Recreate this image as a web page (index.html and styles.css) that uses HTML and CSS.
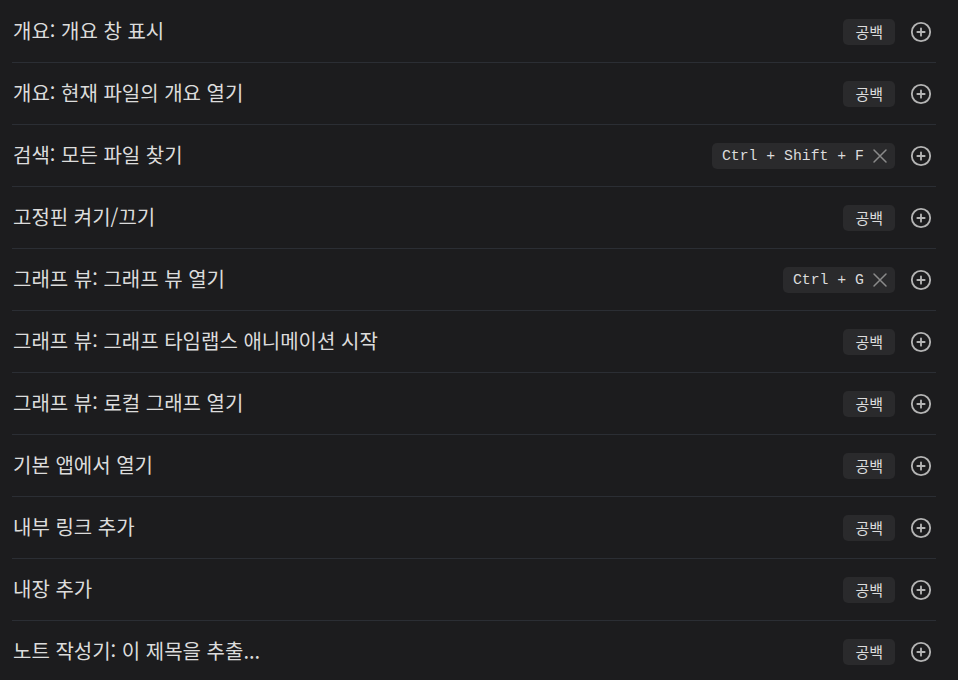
FILE: index.html
```html
<!DOCTYPE html>
<html lang="ko">
<head>
<meta charset="utf-8">
<title>Hotkeys</title>
<link rel="stylesheet" href="styles.css">
</head>
<body>
<div class="list">
  <div class="row">
    <div class="name">개요: 개요 창 표시</div>
    <div class="controls">
      <span class="hotkey empty">공백</span>
      <span class="add"><svg viewBox="0 0 24 24"><circle cx="12" cy="12" r="10"/><path d="M8 12h8M12 8v8"/></svg></span>
    </div>
  </div>
  <div class="row">
    <div class="name">개요: 현재 파일의 개요 열기</div>
    <div class="controls">
      <span class="hotkey empty">공백</span>
      <span class="add"><svg viewBox="0 0 24 24"><circle cx="12" cy="12" r="10"/><path d="M8 12h8M12 8v8"/></svg></span>
    </div>
  </div>
  <div class="row">
    <div class="name">검색: 모든 파일 찾기</div>
    <div class="controls">
      <span class="hotkey keys">Ctrl + Shift + F<svg class="x" viewBox="0 0 16 16"><path d="M2 2 14 14M14 2 2 14"/></svg></span>
      <span class="add"><svg viewBox="0 0 24 24"><circle cx="12" cy="12" r="10"/><path d="M8 12h8M12 8v8"/></svg></span>
    </div>
  </div>
  <div class="row">
    <div class="name">고정핀 켜기/끄기</div>
    <div class="controls">
      <span class="hotkey empty">공백</span>
      <span class="add"><svg viewBox="0 0 24 24"><circle cx="12" cy="12" r="10"/><path d="M8 12h8M12 8v8"/></svg></span>
    </div>
  </div>
  <div class="row">
    <div class="name">그래프 뷰: 그래프 뷰 열기</div>
    <div class="controls">
      <span class="hotkey keys">Ctrl + G<svg class="x" viewBox="0 0 16 16"><path d="M2 2 14 14M14 2 2 14"/></svg></span>
      <span class="add"><svg viewBox="0 0 24 24"><circle cx="12" cy="12" r="10"/><path d="M8 12h8M12 8v8"/></svg></span>
    </div>
  </div>
  <div class="row">
    <div class="name">그래프 뷰: 그래프 타임랩스 애니메이션 시작</div>
    <div class="controls">
      <span class="hotkey empty">공백</span>
      <span class="add"><svg viewBox="0 0 24 24"><circle cx="12" cy="12" r="10"/><path d="M8 12h8M12 8v8"/></svg></span>
    </div>
  </div>
  <div class="row">
    <div class="name">그래프 뷰: 로컬 그래프 열기</div>
    <div class="controls">
      <span class="hotkey empty">공백</span>
      <span class="add"><svg viewBox="0 0 24 24"><circle cx="12" cy="12" r="10"/><path d="M8 12h8M12 8v8"/></svg></span>
    </div>
  </div>
  <div class="row">
    <div class="name">기본 앱에서 열기</div>
    <div class="controls">
      <span class="hotkey empty">공백</span>
      <span class="add"><svg viewBox="0 0 24 24"><circle cx="12" cy="12" r="10"/><path d="M8 12h8M12 8v8"/></svg></span>
    </div>
  </div>
  <div class="row">
    <div class="name">내부 링크 추가</div>
    <div class="controls">
      <span class="hotkey empty">공백</span>
      <span class="add"><svg viewBox="0 0 24 24"><circle cx="12" cy="12" r="10"/><path d="M8 12h8M12 8v8"/></svg></span>
    </div>
  </div>
  <div class="row">
    <div class="name">내장 추가</div>
    <div class="controls">
      <span class="hotkey empty">공백</span>
      <span class="add"><svg viewBox="0 0 24 24"><circle cx="12" cy="12" r="10"/><path d="M8 12h8M12 8v8"/></svg></span>
    </div>
  </div>
  <div class="row">
    <div class="name">노트 작성기: 이 제목을 추출...</div>
    <div class="controls">
      <span class="hotkey empty">공백</span>
      <span class="add"><svg viewBox="0 0 24 24"><circle cx="12" cy="12" r="10"/><path d="M8 12h8M12 8v8"/></svg></span>
    </div>
  </div>
</div>
</body>
</html>
```

FILE: styles.css
```css
html, body {
  margin: 0;
  padding: 0;
  background: #1c1c1e;
  height: 100%;
  overflow: hidden;
}

body {
  font-family: "Noto Sans CJK KR", "Noto Sans", sans-serif;
  color: #dcdcdc;
}

.list {
  padding: 1px 22px 0 12px;
}

.row {
  display: flex;
  align-items: center;
  justify-content: space-between;
  height: 61px;
  border-bottom: 1px solid #2b2e34;
  padding-right: 4px;
}

.name {
  font-size: 20px;
  line-height: 24px;
  padding-left: 1px;
  margin-top: -1px;
}

.controls {
  display: flex;
  align-items: center;
  gap: 15px;
}

.hotkey {
  display: inline-flex;
  align-items: center;
  height: 26px;
  box-sizing: border-box;
  border-radius: 5px;
  background: #2a2a2c;
  color: #dcdcdc;
}

.empty {
  font-size: 15px;
  padding: 0 12px;
}

.keys {
  font-family: "Liberation Mono", "DejaVu Sans Mono", monospace;
  font-size: 14.8px;
  padding: 0 7px 0 10px;
  gap: 8px;
}

.x {
  width: 16px;
  height: 16px;
  fill: none;
  stroke: #8a8a8a;
  stroke-width: 1.5;
  stroke-linecap: round;
}

.add {
  display: inline-flex;
  width: 22px;
  height: 22px;
}

.add svg {
  width: 22px;
  height: 22px;
  fill: none;
  stroke: #b4b4b4;
  stroke-width: 2;
  stroke-linecap: round;
}
```
